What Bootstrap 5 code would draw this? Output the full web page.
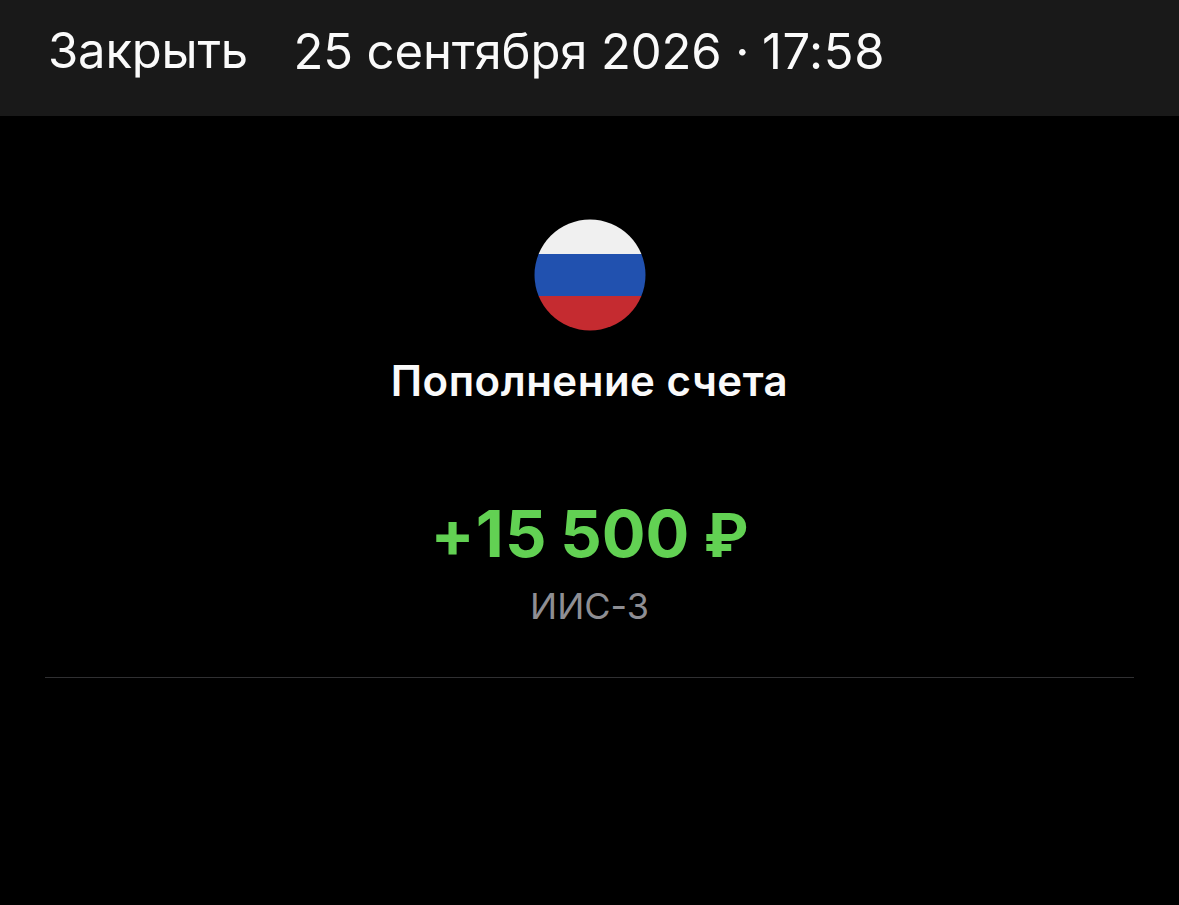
<!DOCTYPE html>
<html lang="ru">
<head>
<meta charset="utf-8">
<meta name="viewport" content="width=device-width, initial-scale=1">
<title>Пополнение счета</title>
<link rel="stylesheet" href="https://cdn.jsdelivr.net/npm/bootstrap@5.3.0/dist/css/bootstrap.min.css">
<style>
body{font-family:Inter,sans-serif;background:#000;color:#fafafa;height:905px;overflow:hidden}
.topbar{height:116px;background:#191919;padding:22px 48px 0}
.close-btn,.stamp{font-size:49px;line-height:58px;font-weight:400;color:#fafafa}
.close-btn{margin-right:45.5px;letter-spacing:-.2px}
.stamp{padding-top:1px;letter-spacing:-.12px}
.clock{letter-spacing:.6px;margin-left:-1px}
.plain{font-feature-settings:"calt" 0}
.op{padding:103px 45px 0}
.op-title{font-size:42px;line-height:50px;margin-top:25px;font-weight:600;letter-spacing:.5px}
.op-sum{font-size:65px;line-height:76px;margin-top:90px;font-weight:700;color:#62d153}
.lead-digits{letter-spacing:1.2px;margin-right:-3px}
.rub{font-family:Roboto,Inter,sans-serif;font-size:62px;line-height:1}
.op-acc{font-size:36px;line-height:44px;margin-top:12px;color:#8e8e93}
.rule{height:1px;background:#303032;margin-top:49px}
</style>
</head>
<body>
<header class="topbar d-flex align-items-start text-nowrap">
<button type="button" class="close-btn btn p-0 border-0">Закрыть</button>
<div class="stamp">25 сентября 2026 <span class="plain">·</span> <span class="clock">17:58</span></div>
</header>
<main class="op d-flex flex-column align-items-center text-nowrap">
<svg width="112" height="112" viewBox="0 0 112 112" aria-hidden="true"><clipPath id="disc"><circle cx="56" cy="56" r="55.5"/></clipPath><g clip-path="url(#disc)"><path fill="#f0f0f0" d="M0 0h112v35H0z"/><path fill="#2151af" d="M0 35h112v42H0z"/><path fill="#c52b30" d="M0 77h112v35H0z"/></g></svg>
<h1 class="op-title mb-0">Пополнение счета</h1>
<div class="op-sum plain"><span class="lead-digits">+15</span> 500 <span class="rub">₽</span></div>
<div class="op-acc plain">ИИС-3</div>
<div class="rule w-100"></div>
</main>
<script src="https://cdn.jsdelivr.net/npm/bootstrap@5.3.0/dist/js/bootstrap.bundle.min.js"></script>
</body>
</html>
